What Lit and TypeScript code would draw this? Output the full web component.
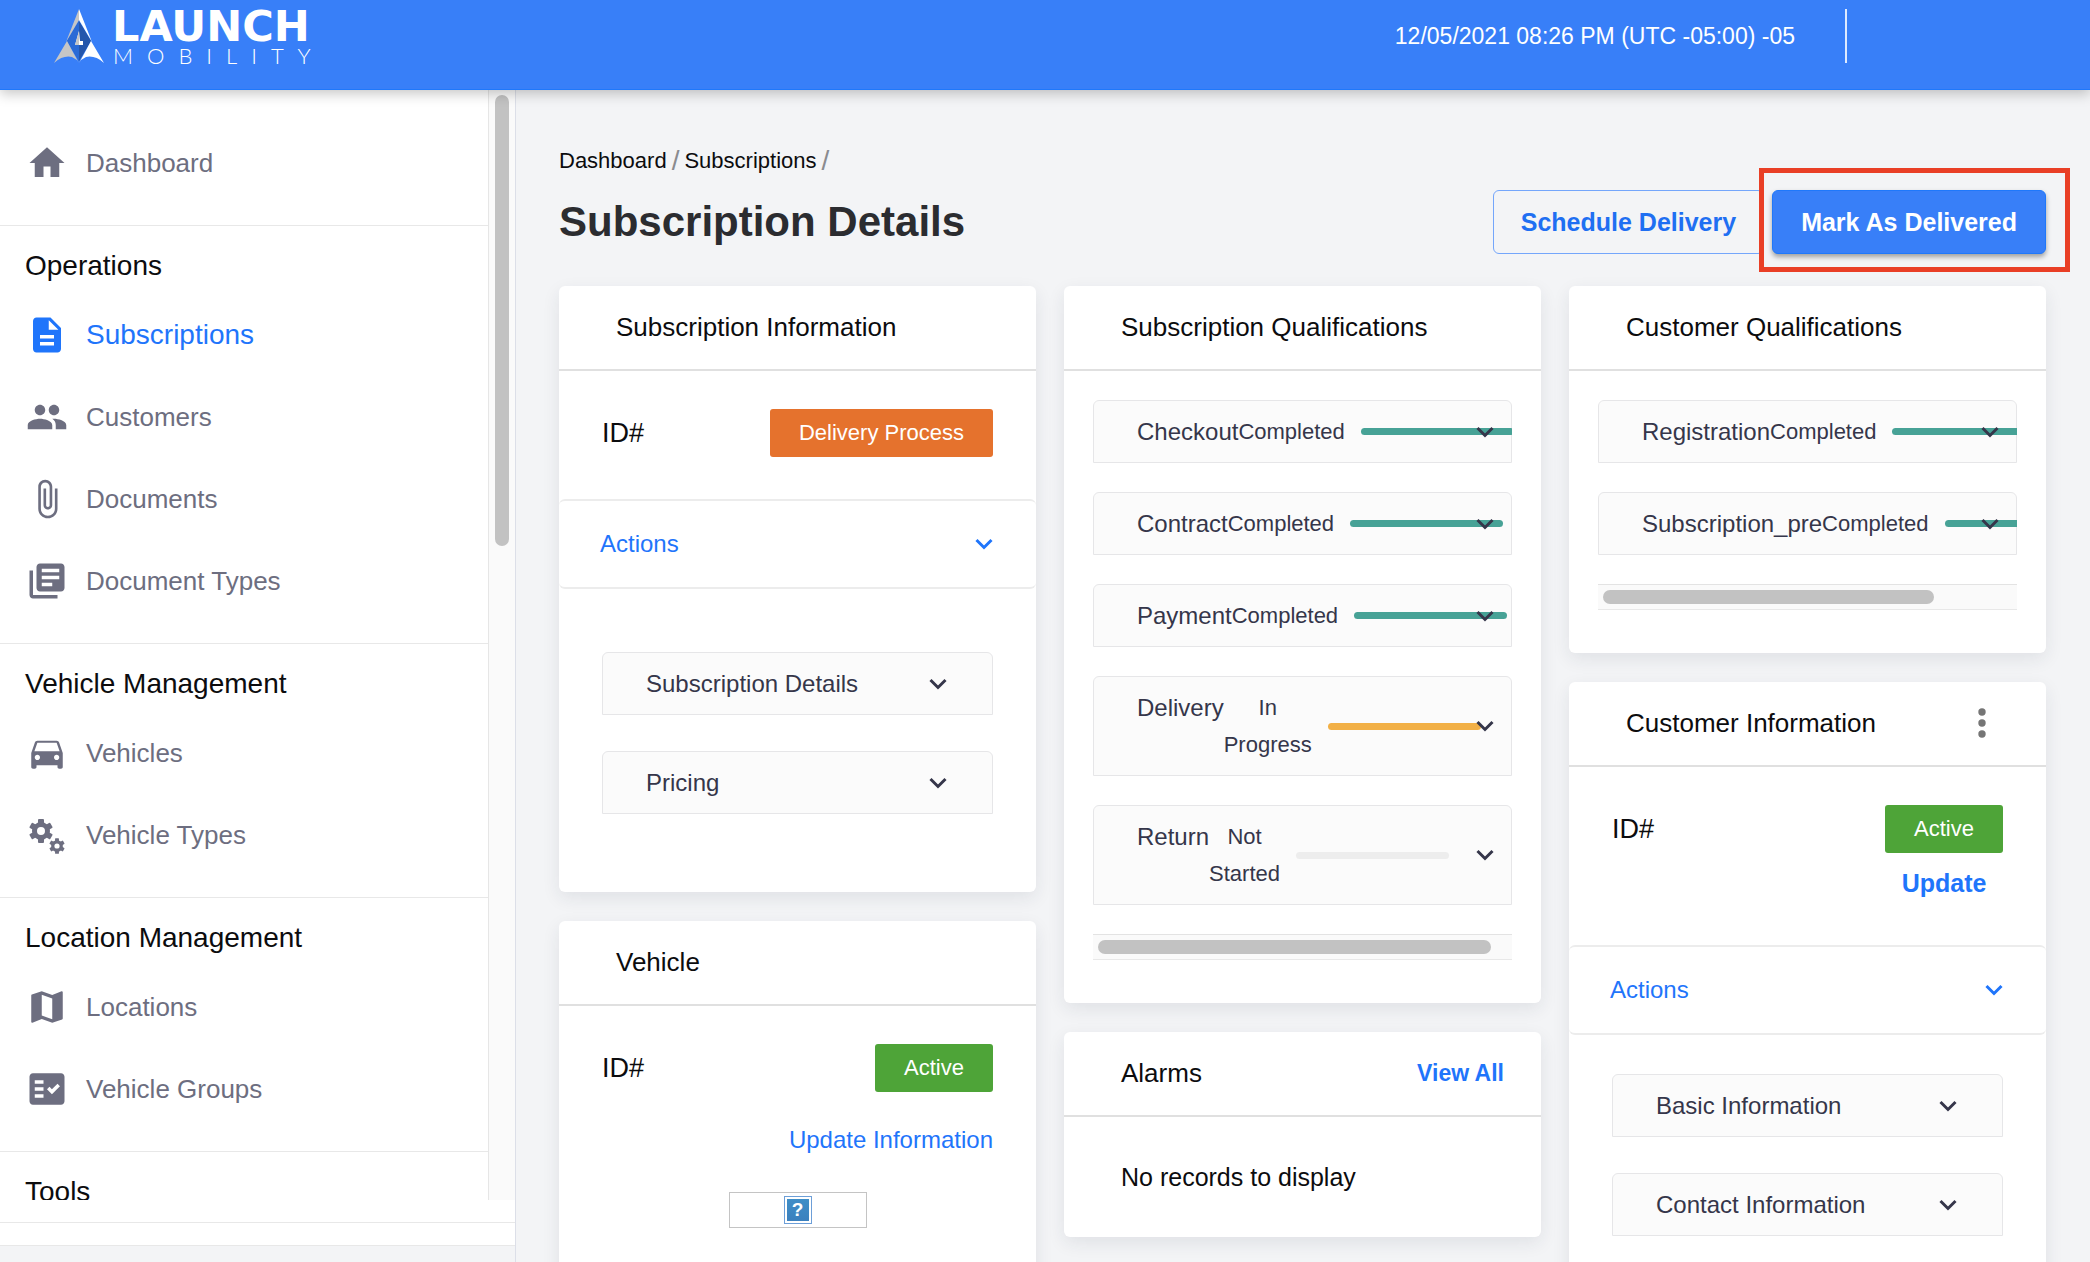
import { LitElement, html, css, svg, nothing, TemplateResult } from "lit";
import { customElement, property } from "lit/decorators.js";
import { classMap } from "lit/directives/class-map.js";

const tooth = (angle: number) =>
  svg`<rect x="-3" y="-12" width="6" height="6" rx="1" transform="rotate(${angle})" />`;
const gear = (transform: string, hole: number) => svg`
  <g transform=${transform}>
    <circle r=${(9 + hole) / 2} fill="none" stroke="currentColor" stroke-width=${9 - hole} />
    ${[0, 60, 120, 180, 240, 300].map(tooth)}
  </g>`;

const path = (d: string) => svg`<path fill-rule="evenodd" d=${d} />`;

const icons: Record<string, TemplateResult<2>> = {
  home: path("M10 20v-6h4v6h5v-8h3L12 3 2 12h3v8z"),
  file: path(
    "M14 2H6c-1.1 0-1.99.9-1.99 2L4 20c0 1.1.89 2 1.99 2H18c1.1 0 2-.9 2-2V8l-6-6zm2 16H8v-2h8v2zm0-4H8v-2h8v2zm-3-5V3.500L18.500 9H13z"
  ),
  people: path(
    "M16 11c1.66 0 2.99-1.34 2.99-3S17.66 5 16 5c-1.66 0-3 1.34-3 3s1.34 3 3 3zm-8 0c1.66 0 2.99-1.34 2.99-3S9.660 5 8 5C6.340 5 5 6.340 5 8s1.340 3 3 3zm0 2c-2.330 0-7 1.170-7 3.500V19h14v-2.500c0-2.330-4.670-3.500-7-3.500zm8 0c-.29 0-.62.02-.97.05 1.160.84 1.970 1.970 1.970 3.450V19h6v-2.500c0-2.330-4.670-3.500-7-3.500z"
  ),
  clip: path(
    "M16.5 6v11.5c0 2.21-1.79 4-4 4s-4-1.79-4-4V5c0-1.38 1.12-2.5 2.5-2.5s2.5 1.12 2.5 2.5v10.5c0 .55-.45 1-1 1s-1-.45-1-1V6H10v9.5c0 1.38 1.12 2.5 2.5 2.5s2.5-1.12 2.5-2.5V5c0-2.21-1.79-4-4-4S7 2.79 7 5v12.5c0 3.04 2.46 5.5 5.5 5.5s5.5-2.46 5.5-5.5V6h-1.5z"
  ),
  library: path(
    "M4 6H2v14c0 1.1.9 2 2 2h14v-2H4V6zm16-4H8c-1.1 0-2 .9-2 2v12c0 1.1.9 2 2 2h12c1.1 0 2-.9 2-2V4c0-1.1-.9-2-2-2zm-1 9H9V9h10v2zm-4 4H9v-2h6v2zm4-8H9V5h10v2z"
  ),
  car: path(
    "M18.92 6.01C18.72 5.42 18.16 5 17.5 5h-11c-.66 0-1.21.42-1.42 1.01L3 12v8c0 .55.45 1 1 1h1c.55 0 1-.45 1-1v-1h12v1c0 .55.45 1 1 1h1c.55 0 1-.45 1-1v-8l-2.08-5.99zM6.5 16c-.83 0-1.5-.67-1.5-1.5S5.67 13 6.5 13s1.5.67 1.5 1.5S7.33 16 6.5 16zm11 0c-.83 0-1.5-.67-1.5-1.5s.67-1.5 1.5-1.5 1.5.67 1.5 1.5-.67 1.5-1.5 1.5zM4.800 11l1.7-4.900h11L19.200 11H4.800z"
  ),
  gears: svg`<g transform="scale(0.5714)">${gear("translate(15 17)", 4)}${gear(
    "translate(31 32) scale(0.65)",
    4
  )}</g>`,
  map: path(
    "M20.500 3l-.16.03L15 5.100 9 3 3.360 4.900c-.21.07-.36.25-.36.48V20.500c0 .28.22.5.5.5l.16-.03L9 18.900l6 2.100 5.640-1.900c.21-.07.36-.25.36-.48V3.500c0-.28-.22-.5-.5-.5zM15 19l-6-2.110V5l6 2.110V19z"
  ),
  check: path(
    "M20 3H4c-1.1 0-2 .9-2 2v14c0 1.1.9 2 2 2h16c1.1 0 2-.9 2-2V5c0-1.1-.9-2-2-2zM10 17H5v-2h5v2zm0-4H5v-2h5v2zm0-4H5V7h5v2zm4.820 6L12 12.160l1.410-1.410 1.410 1.420L17.990 9l1.420 1.420L14.820 15z"
  ),
};

const chevron = html`<svg class="chevron" viewBox="0 0 18 12" aria-hidden="true">
  <path d="M1.500 2l7.500 7.500L16.500 2" fill="none" stroke="currentColor" stroke-width="3" />
</svg>`;

const resets = css`
  * {
    box-sizing: border-box;
  }
  button {
    font: inherit;
    color: inherit;
    background: none;
    border: 0;
    padding: 0;
    margin: 0;
    text-align: left;
    cursor: pointer;
  }
  a {
    color: inherit;
    text-decoration: none;
  }
  h1,
  h2,
  p {
    margin: 0;
    font-weight: 400;
  }
  .chevron {
    width: 18px;
    height: 12px;
    flex: none;
    display: block;
  }
`;

@customElement("top-bar")
class TopBar extends LitElement {
  static styles = [
    resets,
    css`
      :host {
        display: block;
        position: relative;
        z-index: 2;
        background: #387ff8;
        color: #fff;
        border-bottom: 1px solid #1f78fb;
        box-shadow: 0 4px 12px rgba(0, 0, 0, 0.22);
      }
      .bar {
        display: flex;
        justify-content: space-between;
        align-items: flex-start;
        height: 89px;
        padding: 0 243px 0 52px;
      }
      .brand {
        display: flex;
        align-items: center;
        gap: 6px;
        padding-top: 6px;
      }
      .mark {
        width: 54px;
        height: 56px;
        display: block;
      }
      .words {
        display: flex;
        flex-direction: column;
      }
      .launch {
        font: 700 43px/40px "DejaVu Sans", sans-serif;
      }
      .mobility {
        padding-left: 1px;
        font: 300 22px/20px Lato, sans-serif;
        letter-spacing: 14px;
      }
      .clock {
        display: flex;
        align-items: center;
        height: 54px;
        margin-top: 9px;
        padding-right: 50px;
        border-right: 2px solid #dfeafe;
        font-size: 23px;
        line-height: 28px;
      }
    `,
  ];
  render() {
    return html`<header class="bar">
      <a class="brand" href="#home">
        <svg class="mark" viewBox="12 8 54 56" aria-hidden="true">
          <path d="M39 21L27 41l12 20 12-20z" fill="#2f63bd" />
          <path d="M39 21L27 41l12 20z" fill="#2a6ad6" />
          <path d="M39 21v40l12-20z" fill="#2456ac" />
          <path d="M39 9L26 42l13-22z" fill="#c6c6c6" />
          <path d="M39 9l13 33-13-22z" fill="#fff" />
          <path d="M27 41L14 63q9-8 18-6l5 3 2 3-5-9z" fill="#c6c6c6" />
          <path d="M51 41l13 22q-9-8-18-6l-5 3-2 3 5-9z" fill="#fff" />
          <path d="M39 31l-4 14h8v-4h-3z" fill="#fff" />
          <path d="M39 31l-4 14h4z" fill="#c6c6c6" />
        </svg>
        <span class="words">
          <span class="launch">LAUNCH</span>
          <span class="mobility">MOBILITY</span>
        </span>
      </a>
      <time class="clock">12/05/2021 08:26 PM (UTC -05:00) -05</time>
    </header>`;
  }
}

interface NavItem {
  icon: string;
  label: string;
  active?: boolean;
}
interface NavGroup {
  title?: string;
  items: NavItem[];
}

const navigation: NavGroup[] = [
  { items: [{ icon: "home", label: "Dashboard" }] },
  {
    title: "Operations",
    items: [
      { icon: "file", label: "Subscriptions", active: true },
      { icon: "people", label: "Customers" },
      { icon: "clip", label: "Documents" },
      { icon: "library", label: "Document Types" },
    ],
  },
  {
    title: "Vehicle Management",
    items: [
      { icon: "car", label: "Vehicles" },
      { icon: "gears", label: "Vehicle Types" },
    ],
  },
  {
    title: "Location Management",
    items: [
      { icon: "map", label: "Locations" },
      { icon: "check", label: "Vehicle Groups" },
    ],
  },
  { title: "Tools", items: [] },
];

@customElement("side-nav")
class SideNav extends LitElement {
  static styles = [
    resets,
    css`
      :host {
        display: flex;
        flex-direction: column;
        flex: none;
        width: 516px;
        background: #fff;
        border-right: 1px solid #dcdfe8;
      }
      .scroller {
        display: flex;
        flex: 1;
        min-height: 0;
      }
      .list {
        flex: 1;
        overflow: hidden;
        border-right: 1px solid #e6e6e6;
      }
      .track {
        flex: none;
        width: 26px;
        padding: 5px 6px;
        background: #fafafa;
      }
      .thumb {
        width: 14px;
        height: 41%;
        border-radius: 7px;
        background: #c2c2c2;
      }
      .group {
        padding-bottom: 21px;
        border-bottom: 1px solid #e8e8e8;
      }
      .group.untitled {
        padding-top: 32px;
      }
      .heading {
        padding: 24px 25px 12px;
        font-size: 28px;
        line-height: 32px;
        color: #0c0c0e;
      }
      .item {
        display: flex;
        align-items: center;
        gap: 18px;
        height: 82px;
        padding-left: 26px;
        font-size: 26px;
        color: #6d6e80;
      }
      .item.active {
        color: #1f75fb;
        font-size: 28px;
      }
      .icon {
        width: 42px;
        height: 42px;
        fill: currentColor;
      }
      .foot {
        height: 45px;
        padding-top: 22px;
      }
      .rule {
        height: 1px;
        background: #e8e8e8;
      }
      .shelf {
        height: 17px;
        background: #f3f4f6;
        border-top: 1px solid #e8e8e8;
      }
    `,
  ];
  render() {
    return html`
      <div class="scroller">
        <nav class="list">
          ${navigation.map(
            (g) => html`<div class=${classMap({ group: true, untitled: !g.title })}>
              ${g.title ? html`<h2 class="heading">${g.title}</h2>` : nothing}
              ${g.items.map(
                (i) => html`<a class=${classMap({ item: true, active: !!i.active })} href="#">
                  <svg class="icon" viewBox="0 0 24 24" aria-hidden="true">${icons[i.icon]}</svg>
                  <span>${i.label}</span>
                </a>`
              )}
            </div>`
          )}
        </nav>
        <div class="track"><div class="thumb"></div></div>
      </div>
      <div class="foot"><div class="rule"></div></div>
      <div class="shelf"></div>
    `;
  }
}

@customElement("info-card")
class InfoCard extends LitElement {
  @property() heading = "";
  static styles = [
    resets,
    css`
      :host {
        display: block;
        flex: none;
        background: #fff;
        border-radius: 6px;
        box-shadow: 0 6px 18px rgba(30, 40, 70, 0.09);
      }
      .head {
        display: flex;
        align-items: center;
        justify-content: space-between;
        padding: 26px 37px 27px 57px;
        border-bottom: 2px solid #e0e0e0;
        line-height: 30px;
      }
      .title {
        font-size: 26px;
        color: #0c0c0e;
      }
    `,
  ];
  render() {
    return html`<div class="head">
        <h2 class="title">${this.heading}</h2>
        <slot name="action"></slot>
      </div>
      <slot></slot>`;
  }
}

interface Step {
  name: string;
  status: string;
  tone: "done" | "progress" | "idle";
}

@customElement("step-list")
class StepList extends LitElement {
  @property({ attribute: false }) steps: Step[] = [];
  @property({ type: Number }) thumb = 90;
  static styles = [
    resets,
    css`
      :host {
        display: block;
        padding: 29px 29px 43px 29px;
      }
      .rows {
        display: flex;
        flex-direction: column;
        gap: 29px;
        overflow: hidden;
        padding-bottom: 29px;
      }
      .row {
        position: relative;
        display: flex;
        align-items: center;
        width: 100%;
        padding: 12px 0 12px 43px;
        background: #fbfbfb;
        border: 1px solid #e6e6e8;
        border-radius: 6px 6px 0 0;
        color: #35364a;
        line-height: 37px;
      }
      .name {
        align-self: flex-start;
        font-size: 24px;
      }
      .status {
        width: min-content;
        text-align: center;
        font-size: 22px;
      }
      .line {
        flex: none;
        width: 153px;
        height: 7px;
        margin-left: 16px;
        border-radius: 4px;
      }
      .done {
        background: #47a296;
      }
      .progress {
        background: #f2b046;
      }
      .idle {
        background: #ededed;
      }
      .row .chevron {
        position: absolute;
        right: 17px;
        top: calc(50% - 6px);
      }
      .track {
        padding: 5px;
        background: #fafafa;
        border-top: 1px solid #e3e3e3;
        border-bottom: 1px solid #e8e8e8;
      }
      .thumb {
        height: 14px;
        border-radius: 7px;
        background: #c2c2c2;
      }
    `,
  ];
  render() {
    return html`<div class="rows">
        ${this.steps.map(
          (s) => html`<button class="row">
            <span class="name">${s.name}</span>
            <span class="status">${s.status}</span>
            <span class="line ${s.tone}"></span>
            ${chevron}
          </button>`
        )}
      </div>
      <div class="track"><div class="thumb" style="width:${this.thumb}%"></div></div>`;
  }
}

const subscriptionSteps: Step[] = [
  { name: "Checkout", status: "Completed", tone: "done" },
  { name: "Contract", status: "Completed", tone: "done" },
  { name: "Payment", status: "Completed", tone: "done" },
  { name: "Delivery", status: "In Progress", tone: "progress" },
  { name: "Return", status: "Not Started", tone: "idle" },
];
const customerSteps: Step[] = [
  { name: "Registration", status: "Completed", tone: "done" },
  { name: "Subscription_pre", status: "Completed", tone: "done" },
];

@customElement("app-root")
class AppRoot extends LitElement {
  static styles = [
    resets,
    css`
      :host {
        display: flex;
        flex-direction: column;
        height: 100vh;
        overflow: hidden;
        font-family: "Liberation Sans", Arial, sans-serif;
        background: #f3f4f6;
        color: #0c0c0e;
      }
      .body {
        display: flex;
        flex: 1;
        min-height: 0;
      }
      .main {
        flex: 1;
        min-width: 0;
        overflow: hidden;
        padding: 56px 44px 0 43px;
      }
      .crumbs {
        display: flex;
        align-items: center;
        gap: 5px;
        height: 30px;
        margin-bottom: 14px;
        font-size: 22px;
      }
      .slash {
        font-size: 28px;
        line-height: 28px;
        color: #8a8b8f;
      }
      .titlebar {
        display: flex;
        align-items: center;
        justify-content: space-between;
        margin-bottom: 32px;
      }
      .title {
        font-size: 42px;
        line-height: 50px;
        font-weight: 700;
        color: #2b2c30;
      }
      .buttons {
        display: flex;
        gap: 8px;
      }
      .btn {
        height: 64px;
        padding: 0 27px;
        border: 1px solid #74a6fb;
        border-radius: 6px;
        font-size: 25px;
        font-weight: 700;
        color: #1f6ff2;
        white-space: nowrap;
      }
      .btn.primary {
        padding: 0 28px;
        background: #387ff8;
        border-color: #1f78fb;
        color: #fff;
        box-shadow: 0 3px 5px rgba(0, 0, 0, 0.35);
      }
      .callout {
        position: relative;
      }
      .callout::after {
        content: "";
        position: absolute;
        inset: -22px -24px -18px -13px;
        border: 5px solid #e93f26;
        pointer-events: none;
      }
      .grid {
        display: grid;
        grid-template-columns: repeat(3, minmax(0, 1fr));
        gap: 28px;
      }
      .column {
        display: flex;
        flex-direction: column;
        gap: 29px;
      }
      .ident {
        display: flex;
        justify-content: space-between;
        align-items: flex-start;
        padding: 38px 43px 42px;
      }
      .ident.tall {
        padding-bottom: 46px;
      }
      .ident.open {
        padding-bottom: 32px;
      }
      .id {
        font-size: 27px;
        line-height: 48px;
      }
      .side {
        display: flex;
        flex-direction: column;
        align-items: center;
        gap: 14px;
      }
      .badge {
        padding: 0 29px;
        border-radius: 3px;
        font-size: 22px;
        line-height: 48px;
        color: #fff;
      }
      .orange {
        background: #e5722d;
      }
      .green {
        background: #4ea438;
      }
      .actions {
        display: flex;
        align-items: center;
        justify-content: space-between;
        width: 100%;
        height: 90px;
        padding: 0 43px 0 41px;
        border-top: 2px solid #ececec;
        border-bottom: 2px solid #ececec;
        border-radius: 6px;
        font-size: 24px;
        color: #1f75fb;
      }
      .panels {
        display: flex;
        flex-direction: column;
        gap: 36px;
        padding: 63px 43px 78px;
      }
      .panels.near {
        padding-top: 39px;
      }
      .panel {
        display: flex;
        align-items: center;
        justify-content: space-between;
        height: 63px;
        padding: 0 45px 0 43px;
        background: #fbfbfb;
        border: 1px solid #e6e6e8;
        border-radius: 6px 6px 0 0;
        font-size: 24px;
        color: #35364a;
      }
      .link {
        color: #1f75fb;
        font-size: 24px;
        line-height: 32px;
      }
      .strong {
        font-weight: 700;
      }
      .viewall {
        font-size: 23px;
        line-height: 30px;
      }
      .update {
        font-size: 25px;
      }
      .vehicle {
        display: flex;
        flex-direction: column;
        padding: 0 43px 72px;
      }
      .vehicle .link {
        align-self: flex-end;
      }
      .picture {
        align-self: center;
        display: flex;
        align-items: center;
        justify-content: center;
        width: 138px;
        height: 36px;
        margin-top: 36px;
        border: 1px solid #c4c4c4;
      }
      .missing {
        width: 28px;
        height: 28px;
        border: 1px solid #6d9fd8;
        outline: 2px solid #fff;
        outline-offset: -3px;
        background: linear-gradient(#3f8fc8, #3b7fbd);
        color: #fff;
        font-size: 19px;
        font-weight: 700;
        line-height: 26px;
        text-align: center;
      }
      .dots {
        width: 22px;
        height: 30px;
        margin-right: 16px;
        display: block;
        color: #757575;
      }
      .dots svg {
        display: block;
        width: 22px;
        height: 30px;
      }
      .empty {
        padding: 45px 57px 45px;
        font-size: 25px;
        line-height: 30px;
      }
    `,
  ];

  private panel(label: string) {
    return html`<button class="panel"><span>${label}</span>${chevron}</button>`;
  }

  private actions() {
    return html`<button class="actions"><span>Actions</span>${chevron}</button>`;
  }

  render() {
    return html`
      <top-bar></top-bar>
      <div class="body">
        <side-nav></side-nav>
        <main class="main">
          <nav class="crumbs">
            <a href="#dashboard">Dashboard</a><span class="slash">/</span>
            <a href="#subscriptions">Subscriptions</a><span class="slash">/</span>
          </nav>
          <div class="titlebar">
            <h1 class="title">Subscription Details</h1>
            <div class="buttons">
              <button class="btn">Schedule Delivery</button>
              <span class="callout"><button class="btn primary">Mark As Delivered</button></span>
            </div>
          </div>
          <div class="grid">
            <div class="column">
              <info-card heading="Subscription Information">
                <div class="ident">
                  <span class="id">ID#</span>
                  <span class="badge orange">Delivery Process</span>
                </div>
                ${this.actions()}
                <div class="panels">
                  ${this.panel("Subscription Details")} ${this.panel("Pricing")}
                </div>
              </info-card>
              <info-card heading="Vehicle">
                <div class="ident open">
                  <span class="id">ID#</span>
                  <span class="badge green">Active</span>
                </div>
                <div class="vehicle">
                  <a class="link" href="#update-vehicle">Update Information</a>
                  <div class="picture"><span class="missing">?</span></div>
                </div>
              </info-card>
            </div>
            <div class="column">
              <info-card heading="Subscription Qualifications">
                <step-list .steps=${subscriptionSteps} .thumb=${96}></step-list>
              </info-card>
              <info-card heading="Alarms">
                <a slot="action" class="link strong viewall" href="#alarms">View All</a>
                <p class="empty">No records to display</p>
              </info-card>
            </div>
            <div class="column">
              <info-card heading="Customer Qualifications">
                <step-list .steps=${customerSteps} .thumb=${81}></step-list>
              </info-card>
              <info-card heading="Customer Information">
                <button slot="action" class="dots" aria-label="More options">
                  <svg viewBox="0 0 22 30" fill="currentColor" aria-hidden="true">
                    <circle cx="11" cy="4" r="3.700" />
                    <circle cx="11" cy="15" r="3.700" />
                    <circle cx="11" cy="26" r="3.700" />
                  </svg>
                </button>
                <div class="ident tall">
                  <span class="id">ID#</span>
                  <span class="side">
                    <span class="badge green">Active</span>
                    <button class="link strong update">Update</button>
                  </span>
                </div>
                ${this.actions()}
                <div class="panels near">
                  ${this.panel("Basic Information")} ${this.panel("Contact Information")}
                </div>
              </info-card>
            </div>
          </div>
        </main>
      </div>
    `;
  }
}
